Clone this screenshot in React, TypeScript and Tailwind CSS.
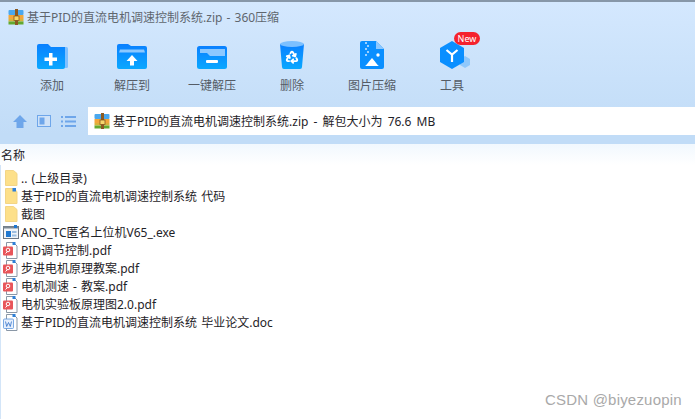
import React from "react";
import { Recycle } from "lucide-react";

const font = { fontFamily: '"Noto Sans", "Noto Sans CJK SC", sans-serif' };

function Zip({ size = 16 }: { size?: number }) {
  return (
    <svg width={size} height={size} viewBox="0 0 16 16" className="shrink-0">
      <rect x="0.5" y="1" width="15" height="5" rx="1" fill="#4aa8ee" />
      <rect x="0.5" y="6" width="15" height="4" fill="#f2a73b" />
      <rect x="0.5" y="10" width="15" height="2.5" fill="#d9b23c" />
      <rect x="0.5" y="12.5" width="15" height="3" fill="#63a92f" />
      <rect x="7" y="0" width="3" height="16" fill="#8b5a22" />
      <rect x="6" y="7" width="5" height="4.5" fill="#f6d66b" stroke="#7a4a18" strokeWidth="0.7" />
    </svg>
  );
}

function Tool({ label, children, badge }: { label: string; children: React.ReactNode; badge?: boolean }) {
  return (
    <div className="relative flex w-20 flex-col items-center">
      <div className="flex h-[28px] w-[36px] items-end justify-center">{children}</div>
      {badge && (
        <span className="absolute left-[42px] top-[-9px] flex h-[13px] w-[26px] items-center justify-center rounded-full bg-[#f5222d] text-[9px] leading-none text-white">
          New
        </span>
      )}
      <span className="mt-[8px] text-[12px] leading-[18px] text-[#555c66]">{label}</span>
    </div>
  );
}

const FolderPlus = () => (
  <svg width="31" height="25" viewBox="0 0 31 25">
    <defs>
      <linearGradient id="fb" x1="0" y1="0" x2="0" y2="1">
        <stop offset="0" stopColor="#0a80ff" />
        <stop offset="1" stopColor="#0aa8ff" />
      </linearGradient>
    </defs>
    <rect x="26" y="3" width="5" height="21" rx="1.500" fill="#7fc0ff" />
    <path d="M2 0h9l3 3h14v20a2 2 0 0 1-2 2H2a2 2 0 0 1-2-2V2a2 2 0 0 1 2-2z" fill="url(#fb)" />
    <path d="M12 9h3.500v4.500H20V17h-4.500v4.500H12V17H7.500v-3.500H12z" fill="#fff" />
  </svg>
);
const FolderUp = () => (
  <svg width="30" height="25" viewBox="0 0 30 25">
    <path d="M2 0h9l3 2h14a2 2 0 0 1 2 2v19a2 2 0 0 1-2 2H2a2 2 0 0 1-2-2V2a2 2 0 0 1 2-2z" fill="url(#fb)" />
    <path d="M2 8.500l1-3h24l1 3z" fill="#8cc8ff" />
    <path d="M15 11l5.500 6H17v4.500h-4V17H9.500z" fill="#fff" />
  </svg>
);
const FolderMinus = () => (
  <svg width="30" height="23" viewBox="0 0 30 23">
    <rect width="30" height="23" rx="2.500" fill="url(#fb)" />
    <path d="M3 3h25v7H13l-3-3H3z" fill="#8cc8ff" />
    <rect x="9" y="14" width="12" height="3" rx="1" fill="#fff" />
  </svg>
);
const Trash = () => (
  <svg width="24" height="28" viewBox="0 0 24 28">
    <path d="M0 3h24l-2 23a2 2 0 0 1-2 2H4a2 2 0 0 1-2-2z" fill="url(#fb)" />
    <ellipse cx="12" cy="3" rx="12" ry="3" fill="#7cc0ff" />
    <Recycle x={5} y={9} width={14} height={14} color="#fff" strokeWidth={3.200} />
  </svg>
);
const ImgZip = () => (
  <svg width="24" height="28" viewBox="0 0 24 28">
    <path d="M2 0h14l8 8v18a2 2 0 0 1-2 2H2a2 2 0 0 1-2-2V2a2 2 0 0 1 2-2z" fill="#0a8fff" />
    <path d="M16 0l8 8h-8z" fill="#8cc8ff" />
    <path d="M5 1h2v2H5zM7 4h2v2H7zM5 7h2v2H5zM7 10h2v2H7zM5 13h2v2H5z" fill="#9bd0ff" />
    <circle cx="18" cy="14" r="1.700" fill="#fff" />
    <path d="M5 25c2-1 4-5 7-8 3 3 5 7 7 8z" fill="#fff" />
  </svg>
);
const Hex = () => (
  <svg width="30" height="28" viewBox="0 0 30 28" className="ml-[6px]">
    <path d="M25 15l5 3v6l-5 3-5-3v-6z" fill="#90c8fb" />
    <path d="M12 0l12 7v14l-12 7-12-7V7z" fill="#0a8fff" />
    <path d="M6.500 9l5.500 4.500L17.500 9M12 13.500V21" fill="none" stroke="#fff" strokeWidth="2.200" />
  </svg>
);

const Folder = ({ linked }: { linked?: boolean }) => (
  <svg width="13" height="16" viewBox="0 0 13 16" className="ml-[5px] mr-[3px] shrink-0">
    <path d="M0.500 0.500h8l3.500 3v12h-11.500z" fill="#fde08a" stroke="#f3d586" />
    {linked && <rect x="7.500" y="0" width="3.500" height="3.500" fill="#2f80d8" />}
  </svg>
);
const Exe = () => (
  <svg width="16" height="16" viewBox="0 0 16 16" className="ml-[3px] mr-[2px] shrink-0">
    <rect x="0.500" y="2.500" width="15" height="12" fill="#f1f4f8" stroke="#6d7885" />
    <rect x="0.500" y="2.500" width="15" height="2" fill="#7d8894" />
    <rect x="3" y="7" width="5" height="6" fill="#1f77d0" />
    <rect x="9" y="7" width="4.500" height="2" fill="#9cbde0" />
    <rect x="9" y="10.500" width="4.500" height="2" fill="#9cbde0" />
    <rect x="11" y="1" width="3" height="3" fill="#1f77d0" />
  </svg>
);
const Pdf = () => (
  <svg width="16" height="17" viewBox="0 0 16 17" className="ml-[3px] mr-[2px] shrink-0">
    <path d="M3.500 0.500h7l3.500 3.500v12.500h-10.500z" fill="#fff" stroke="#8a97a6" />
    <rect x="0" y="4.500" width="10" height="9" rx="1" fill="#e8555a" />
    <circle cx="5" cy="8" r="1.800" fill="none" stroke="#fff" strokeWidth="1" />
    <path d="M2.500 11.500l2-2" stroke="#fff" strokeWidth="1" />
    <rect x="9.500" y="0" width="3" height="3" fill="#2f80d8" />
  </svg>
);
const Doc = () => (
  <svg width="16" height="17" viewBox="0 0 16 17" className="ml-[3px] mr-[2px] shrink-0">
    <path d="M3.500 0.500h7l3.500 3.500v12.500h-10.500z" fill="#fff" stroke="#8a97a6" />
    <rect x="0.500" y="5" width="10" height="9.500" rx="1" fill="#e6effc" stroke="#5a94dc" strokeWidth="0.800" />
    <path d="M2.500 7.500l1.200 5 1.800-4 1.800 4 1.200-5" fill="none" stroke="#2f6fc8" strokeWidth="0.800" />
    <rect x="9.500" y="0" width="3" height="3" fill="#2f80d8" />
  </svg>
);

const rows: [React.ReactNode, string][] = [
  [<Folder />, ".. (上级目录)"],
  [<Folder linked />, "基于PID的直流电机调速控制系统 代码"],
  [<Folder />, "截图"],
  [<Exe />, "ANO_TC匿名上位机V65_.exe"],
  [<Pdf />, "PID调节控制.pdf"],
  [<Pdf />, "步进电机原理教案.pdf"],
  [<Pdf />, "电机测速 - 教案.pdf"],
  [<Pdf />, "电机实验板原理图2.0.pdf"],
  [<Doc />, "基于PID的直流电机调速控制系统 毕业论文.doc"],
];

export default function App() {
  return (
    <div className="relative flex h-[419px] w-[695px] flex-col overflow-hidden bg-white" style={font}>
      <div className="flex h-[135px] flex-col border-t-2 border-[#8797a8] bg-gradient-to-b from-[#d4e8fe] to-[#c1dcf7]">
        <div className="flex h-[30px] items-center gap-[3px] pl-[8px] text-[12px] text-[#5f666e]">
          <Zip />
          <span className="pt-px [word-spacing:1px]">基于PID的直流电机调速控制系统.zip - 360压缩</span>
        </div>
        <div className="flex pl-[12px] pt-[9px]">
          <Tool label="添加"><FolderPlus /></Tool>
          <Tool label="解压到"><FolderUp /></Tool>
          <Tool label="一键解压"><FolderMinus /></Tool>
          <Tool label="删除"><Trash /></Tool>
          <Tool label="图片压缩"><ImgZip /></Tool>
          <Tool label="工具" badge><Hex /></Tool>
        </div>
        <div className="mt-auto flex h-[28px] items-center">
          <div className="flex w-[88px] items-center gap-[10px] pl-[13px]">
            <svg width="14" height="13" viewBox="0 0 14 13"><path d="M7 0l7 7h-3.500v6h-7V7H0z" fill="#6ea6ea" /></svg>
            <svg width="14" height="12" viewBox="0 0 14 12"><rect x="0.500" y="0.500" width="13" height="11" fill="#cfe2f8" stroke="#6ea6ea" /><rect x="2.500" y="2.500" width="5" height="7" fill="#6ea6ea" /></svg>
            <svg width="15" height="11" viewBox="0 0 15 11"><path d="M0 0h2v2H0zM4 0h11v2H4zM0 4.500h2v2H0zM4 4.500h11v2H4zM0 9h2v2H0zM4 9h11v2H4z" fill="#6ea6ea" /></svg>
          </div>
          <div className="flex h-full flex-1 items-center gap-[3px] bg-white pl-[6px] text-[12px] text-[#1f2328]">
            <Zip size={16} />
            <span className="pt-px [word-spacing:2px]">基于PID的直流电机调速控制系统.zip - 解包大小为 76.6 MB</span>
          </div>
        </div>
      </div>
      <div className="h-[9px] bg-[#c1dcf7]" />
      <div className="flex h-[21px] items-center bg-gradient-to-b from-[#f1f8fe] to-white pl-[1px] pt-[2px] text-[12px] text-[#1f2328]">名称</div>
      <div className="flex flex-1 flex-col pt-[4px] shadow-[inset_1px_0_0_#d3e5f8]">
        {rows.map(([icon, name], i) => (
          <div key={i} className="flex h-[18px] items-center text-[12px] text-[#1f2328]">
            {icon}
            <span className="whitespace-nowrap pt-[2px] [word-spacing:1px]">{name}</span>
          </div>
        ))}
      </div>
      <span className="absolute left-[545px] top-[391px] text-[15px] leading-[18px] tracking-[0.2px] text-[#a9a9a9]" style={{ fontFamily: '"Liberation Sans", sans-serif' }}>
        CSDN @biyezuopin
      </span>
    </div>
  );
}
